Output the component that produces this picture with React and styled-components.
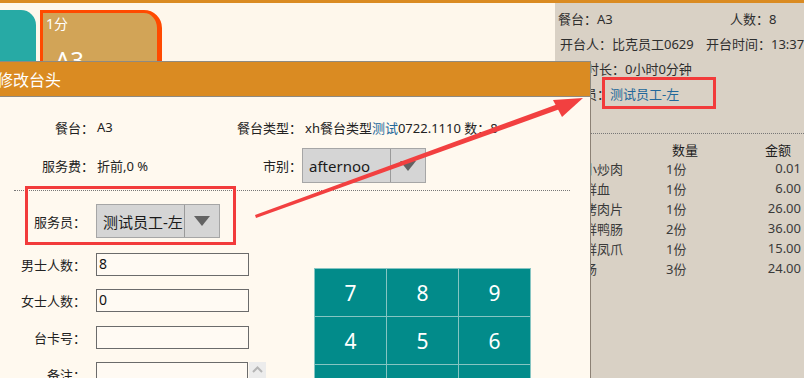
import React from "react";
import styled, { createGlobalStyle } from "styled-components";

const FONT = '"Noto Sans", "Noto Sans CJK SC", sans-serif';

const GlobalStyle = createGlobalStyle`
  html, body {
    margin: 0;
    padding: 0;
    background: #fef7eb;
    font-family: ${FONT};
  }
  * { box-sizing: border-box; }
`;

const Screen = styled.div`
  position: relative;
  width: 804px;
  height: 378px;
  overflow: hidden;
`;

const Page = styled.div`
  display: flex;
  height: 100%;
  border-top: 3px solid #da8b22;
`;

const Floor = styled.div`
  flex: 1;
  padding-top: 7px;
`;

const CardRow = styled.div`
  display: flex;
  gap: 4px;
`;

const TealCard = styled.div`
  width: 36px;
  height: 90px;
  background: #27aaa5;
  border-top-right-radius: 15px;
`;

const TableCard = styled.div`
  width: 122px;
  height: 90px;
  background: #d2a457;
  border: 3px solid #ff4a00;
  border-right-width: 5px;
  border-top-right-radius: 18px;
  color: #fff;
  padding: 2px 0 0 3px;
`;

const CardSub = styled.div`
  font-size: 14px;
  line-height: 18px;
`;

const CardName = styled.div`
  font-size: 24px;
  line-height: 30px;
  margin: 12px 0 0 9px;
`;

const Sidebar = styled.div`
  width: 249px;
  background: #d9d1c5;
  padding: 3px 0 0 3px;
  color: #2e2e2e;
  font-size: 13px;
`;

const StatRow = styled.div`
  display: flex;
  height: 25px;
  align-items: center;
  white-space: nowrap;
`;

const Stat = styled.span`
  width: ${(p) => (p.w ? `${p.w}px` : "auto")};
  padding-left: ${(p) => p.pad || 0}px;
  flex-shrink: 0;
`;

const Blue = styled.span`
  color: #22689a;
`;

const Dotted = styled.div`
  border-top: 1px dotted #777;
  margin: ${(p) => p.m || "0"};
`;

const Table = styled.div`
  margin-top: 6px;
  padding-right: 3px;
`;

const TRow = styled.div`
  display: grid;
  grid-template-columns: 108px 60px 1fr;
  height: ${(p) => (p.head ? 18 : 20)}px;
  align-items: center;
  color: ${(p) => (p.head ? "#1e1e1e" : "#3a3a3a")};
`;

const QtyCell = styled.span`
  padding-left: ${(p) => (p.head ? 6 : 0)}px;
`;

const AmountCell = styled.span`
  text-align: right;
  padding-right: ${(p) => (p.head ? 10 : 0)}px;
`;

/* dialog */

const Modal = styled.div`
  position: absolute;
  left: 0;
  top: 61px;
  width: 591px;
  bottom: 0;
  display: flex;
  flex-direction: column;
`;

const TitleBar = styled.div`
  flex-shrink: 0;
  height: 36px;
  background: #da8b22;
  border-top: 1px solid #8f8a80;
  border-bottom: 1px solid #8f8a80;
  border-right: 1px solid #8f8a80;
  color: #fff;
  font-size: 16px;
  display: flex;
  align-items: center;
  text-indent: -3px;
`;

const Body = styled.div`
  flex: 1;
  min-height: 0;
  overflow: hidden;
  background: #fff9ef;
  border-right: 1px solid #8c8175;
  padding-top: 19px;
  color: #222;
  font-size: 13px;
`;

const InfoRow = styled.div`
  display: grid;
  grid-template-columns: 94px 136px 66px 1fr;
  column-gap: 3px;
  align-items: center;
  height: ${(p) => p.h}px;
  margin-top: ${(p) => p.mt || 0}px;
  white-space: nowrap;
`;

const InfoLabel = styled.span`
  display: flex;
  justify-content: flex-end;
`;

const Select = styled.div`
  display: flex;
  width: ${(p) => p.w}px;
  height: ${(p) => p.h}px;
  margin-left: ${(p) => p.shift || 0}px;
  background: #d5d5d5;
  border: 1px solid #a6a6a6;
  font-size: 15px;
  color: #1a1a1a;
`;

const SelectText = styled.div`
  flex: 1;
  overflow: hidden;
  white-space: nowrap;
  padding-left: 6px;
  display: flex;
  align-items: center;
  border-right: 1px solid #9a9a9a;
`;

const SelectArrow = styled.div`
  width: 34px;
  display: flex;
  align-items: center;
  justify-content: center;
`;

const Triangle = styled.div`
  width: 0;
  height: 0;
  border-left: 8px solid transparent;
  border-right: 8px solid transparent;
  border-top: 10px solid #636363;
`;

const FieldRow = styled.div`
  display: flex;
  align-items: ${(p) => (p.top ? "flex-start" : "center")};
  height: ${(p) => p.h || 23}px;
  margin-top: ${(p) => p.mt || 0}px;
`;

const FieldLabel = styled.span`
  width: 86px;
  margin-right: 10px;
  text-align: right;
  white-space: nowrap;
  line-height: ${(p) => (p.top ? "27px" : "normal")};
`;

const FormArea = styled.div`
  display: flex;
  margin-top: 15px;
`;

const Fields = styled.div`
  display: flex;
  flex-direction: column;
  gap: 13.3px;
`;

const Input = styled.div`
  width: 153px;
  height: 23px;
  border: 1.5px solid #6b6b6b;
  background: #fffaf3;
  font-size: 14px;
  padding-left: 2px;
  line-height: 20px;
  color: #111;
`;

const TextArea = styled(Input)`
  width: 152px;
  height: 40px;
`;

const ScrollBtn = styled.div`
  width: 17px;
  height: 40px;
  background: #ececec;
  margin-left: 1px;
  display: flex;
  justify-content: center;
  padding-top: 4px;
`;

const Pad = styled.div`
  display: grid;
  grid-template-columns: repeat(3, 72px);
  grid-auto-rows: 48px;
  margin: 15px 0 0 48px;
  border-top: 1px solid #86c5c2;
  border-left: 1px solid #86c5c2;
  align-self: flex-start;
`;

const Key = styled.div`
  background: #028b8a;
  border-right: 1px solid #86c5c2;
  border-bottom: 1px solid #86c5c2;
  color: #fff;
  font-size: 21px;
  display: flex;
  align-items: center;
  justify-content: center;
`;

const Overlay = styled.svg`
  position: absolute;
  left: 0;
  top: 0;
  pointer-events: none;
`;

const dishes = [
  ["农家小炒肉", "1份", "0.01"],
  ["新品鲜血", "1份", "6.00"],
  ["秘制烤肉片", "1份", "26.00"],
  ["特色鲜鸭肠", "2份", "36.00"],
  ["特色鲜凤爪", "1份", "15.00"],
  ["猪大肠", "3份", "24.00"],
];

const fields = [
  ["男士人数：", "8"],
  ["女士人数：", "0"],
  ["台卡号：", ""],
];

const keys = ["7", "8", "9", "4", "5", "6", "1", "2", "3"];

const App = () => {
  return (
    <Screen>
      <GlobalStyle />
      <Page>
        <Floor>
          <CardRow>
            <TealCard />
            <TableCard>
              <CardSub>1分</CardSub>
              <CardName>A3</CardName>
            </TableCard>
          </CardRow>
        </Floor>
        <Sidebar>
          <StatRow>
            <Stat w={172}>餐台：A3</Stat>
            <Stat>人数：8</Stat>
          </StatRow>
          <StatRow>
            <Stat w={148} pad={2}>开台人：比克员工0629</Stat>
            <Stat>开台时间：13:37</Stat>
          </StatRow>
          <StatRow>
            <Stat pad={2}>开台时长：0小时0分钟</Stat>
          </StatRow>
          <StatRow>
            <Stat>
              服务员：<Blue>测试员工-左</Blue>
            </Stat>
          </StatRow>
          <StatRow>
            <Stat>备注：</Stat>
          </StatRow>
          <Dotted m="2px 0 0 0" />
          <Table>
            <TRow head>
              <span />
              <QtyCell head>数量</QtyCell>
              <AmountCell head>金额</AmountCell>
            </TRow>
            {dishes.map(([name, qty, amount]) => (
              <TRow key={name}>
                <span>{name}</span>
                <QtyCell>{qty}</QtyCell>
                <AmountCell>{amount}</AmountCell>
              </TRow>
            ))}
          </Table>
        </Sidebar>
      </Page>

      <Modal>
        <TitleBar>修改台头</TitleBar>
        <Body>
          <InfoRow h={22}>
            <InfoLabel>餐台：</InfoLabel>
            <span>A3</span>
            <InfoLabel>餐台类型：</InfoLabel>
            <span>
              xh餐台类型<Blue>测试</Blue>0722.1110 数：8
            </span>
          </InfoRow>
          <InfoRow h={35} mt={10}>
            <InfoLabel>服务费：</InfoLabel>
            <span>折前,0 %</span>
            <InfoLabel>市别：</InfoLabel>
            <Select w={124} h={35} shift={-3}>
              <SelectText>afternoo</SelectText>
              <SelectArrow>
                <Triangle />
              </SelectArrow>
            </Select>
          </InfoRow>
          <Dotted m="7px 20px 0 14px" />
          <FieldRow h={34} mt={13}>
            <FieldLabel>服务员：</FieldLabel>
            <Select w={124} h={34}>
              <SelectText>测试员工-左</SelectText>
              <SelectArrow>
                <Triangle />
              </SelectArrow>
            </Select>
          </FieldRow>
          <FormArea>
            <Fields>
              {fields.map(([label, value]) => (
                <FieldRow key={label}>
                  <FieldLabel>{label}</FieldLabel>
                  <Input>{value}</Input>
                </FieldRow>
              ))}
              <FieldRow top h={40}>
                <FieldLabel top>备注：</FieldLabel>
                <TextArea />
                <ScrollBtn>
                  <svg width="11" height="7" viewBox="0 0 11 7">
                    <path d="M1 6 L5.5 1.5 L10 6" stroke="#b5b5b5" strokeWidth="2" fill="none" />
                  </svg>
                </ScrollBtn>
              </FieldRow>
            </Fields>
            <Pad>
              {keys.map((k) => (
                <Key key={k}>{k}</Key>
              ))}
            </Pad>
          </FormArea>
        </Body>
      </Modal>

      <Overlay width="804" height="378" viewBox="0 0 804 378">
        <rect x="26.5" y="187.5" width="208" height="56" fill="none" stroke="#f23b3b" strokeWidth="3" />
        <rect x="603.5" y="78.5" width="111" height="29" fill="none" stroke="#f23b3b" strokeWidth="3" />
        <polygon points="255,215 256,218 560,109 558,104" fill="#f24040" />
        <polygon points="583,98 553,100 562,117" fill="#f24040" />
      </Overlay>
    </Screen>
  );
};

export default App;
